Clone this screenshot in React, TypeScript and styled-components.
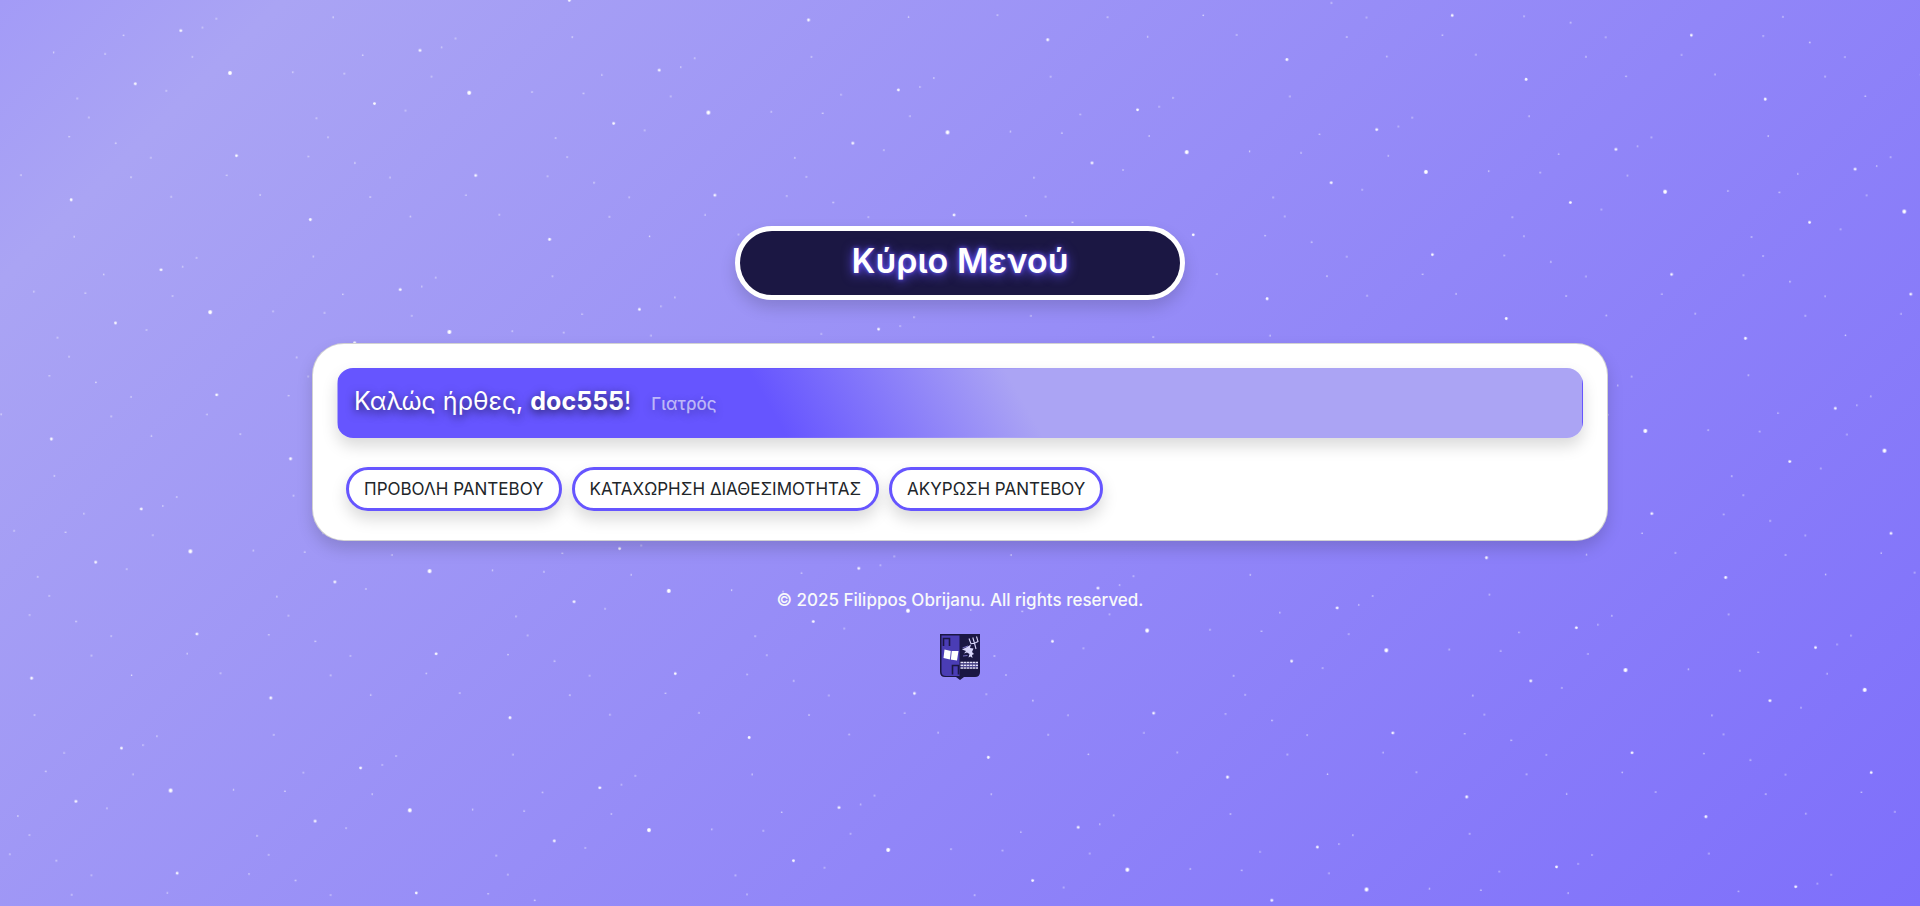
import React from 'react';
import styled, { createGlobalStyle } from 'styled-components';

const colors = {
  ink: '#1b1743',
  violet: '#6655ff',
  lilac: '#aba4f4',
  text: '#212529',
};

const softShadow = '0 8px 16px rgba(0, 0, 0, 0.15)';

const GlobalStyle = createGlobalStyle`
  *, *::before, *::after { box-sizing: border-box; }
  body {
    margin: 0;
    font-family: Inter, "Noto Sans", sans-serif;
    font-size: 17px;
    line-height: 24px;
    color: ${colors.text};
  }
`;

const Page = styled.div`
  position: relative;
  isolation: isolate;
  display: flex;
  flex-direction: column;
  align-items: center;
  justify-content: center;
  min-height: 100vh;
  overflow: hidden;
  background: linear-gradient(135deg, #a39bf7 0%, #aaa4f4 10%, #7e6ffb 100%);
`;

const Sky = styled.svg`
  position: absolute;
  inset: 0;
  z-index: -1;
  width: 100%;
  height: 100%;
`;

const Container = styled.main`
  display: flex;
  flex-direction: column;
  align-items: center;
  width: 100%;
  max-width: 1320px;
  padding: 0 12px;
`;

const Title = styled.h1`
  width: 100%;
  max-width: 450px;
  margin: 0 0 43px;
  padding: 10px 20px 14px;
  border: 5px solid #fff;
  border-radius: 37px;
  background: ${colors.ink};
  box-shadow: ${softShadow};
  color: #fff;
  font-size: 34px;
  font-weight: 600;
  line-height: 40px;
  text-align: center;
  text-shadow: 0 0 4px ${colors.violet}, 0 2px 12px ${colors.violet};
`;

const Card = styled.section`
  width: 100%;
  padding: 24px;
  border: 1px solid rgba(0, 0, 0, 0.175);
  border-radius: 32px;
  background: #fff;
  box-shadow: ${softShadow};
`;

const Banner = styled.header`
  display: flex;
  flex-wrap: wrap;
  align-items: baseline;
  gap: 0 20px;
  padding: 14px 16px 18px;
  border: 1px solid transparent;
  border-radius: 16px;
  background: linear-gradient(60deg, ${colors.violet} 35%, ${colors.lilac} 55%);
  box-shadow: ${softShadow};
  color: #fff;
  text-shadow: 0 3px 10px rgba(0, 0, 0, 0.7);
`;

const Greeting = styled.h2`
  margin: 0;
  font-size: 25px;
  font-weight: 400;
  line-height: 36px;

  strong { font-weight: 700; }
`;

const Role = styled.span`
  color: rgba(255, 255, 255, 0.6);
  font-weight: 500;
  text-shadow: 0 3px 10px rgba(0, 0, 0, 0.3);
`;

const Actions = styled.nav`
  display: flex;
  flex-wrap: wrap;
  gap: 10px;
  margin-top: 24px;
  padding: 5px 9px;
`;

const ActionButton = styled.button`
  padding: 7px 15px;
  border: 3px solid ${colors.violet};
  border-radius: 22px;
  background: #fff;
  box-shadow: ${softShadow};
  color: ${colors.text};
  font: inherit;
  cursor: pointer;
`;

const Footer = styled.footer`
  display: flex;
  flex-direction: column;
  align-items: center;
  gap: 22px;
  margin-top: 47px;
  color: #f8f9fa;
`;

const Copyright = styled.p`
  margin: 0;
  font-weight: 500;
`;

const Crest = styled.svg`
  display: block;
  width: 40px;
  height: 46px;
`;

/* x, y, radius, opacity inside one 240 by 240 tile */
const stars: [number, number, number, number][] = [
  [20, 20, 1.9, 1],
  [166.5, 38.6, 1.4, 0.95],
  [33.3, 101.8, 1.4, 0.95],
  [112.2, 159.5, 1.4, 0.95],
  [207.5, 221.8, 1.4, 0.95],
  [82.6, 14.1, 0.8, 0.7],
  [134, 11.2, 0.8, 0.75],
  [221.2, 7, 0.8, 0.7],
  [198, 43, 0.8, 0.7],
  [109.9, 58, 0.8, 0.8],
  [123, 76, 0.8, 0.7],
  [105, 96.8, 0.8, 0.7],
  [151.9, 99.4, 0.8, 0.7],
  [25.2, 122.2, 0.8, 0.7],
  [188.1, 111, 0.8, 0.7],
  [60.1, 139.1, 0.8, 0.7],
  [170, 132.1, 0.8, 0.7],
  [211.6, 148.2, 0.8, 0.75],
  [118.2, 196, 0.8, 0.75],
  [1.9, 207, 0.8, 0.75],
  [228.8, 217, 0.8, 0.7],
  [150.8, 231.2, 0.8, 0.7],
];

const StarField = () => (
  <Sky aria-hidden="true">
    <defs>
      <pattern
        id="stars"
        width="240"
        height="240"
        patternUnits="userSpaceOnUse"
        patternTransform="translate(230 73) rotate(4.73) translate(-20 -20)"
      >
        {stars.map(([x, y, r, o]) => (
          <circle key={`${x}-${y}`} cx={x} cy={y} r={r} fill="#fff" fillOpacity={o} />
        ))}
      </pattern>
    </defs>
    <rect width="100%" height="100%" fill="url(#stars)" />
  </Sky>
);

const CrestLogo = () => (
  <Crest viewBox="0 0 40 46" role="img" aria-label="Crest">
    <path d="M0 0H40V38Q40 43 35 43H24L20 46L16 43H5Q0 43 0 38Z" fill={colors.ink} />
    <path d="M1.5 1.5H19.5V42H6Q1.5 42 1.5 37.5Z" fill="#4a3db5" />
    <path d="M3.5 12V4.5H9.5V12M12.5 40.5V31.5H18.5V40.5" fill="none" stroke={colors.ink} strokeWidth="1.6" />
    <path d="M4.5 15.5L11 17L18.5 17L17 26.5L10 25.5L3.5 24Z" fill="#fff" />
    <path d="M11.3 17L10.3 26" stroke="#4a3db5" strokeWidth="0.9" />
    <path d="M29 4.5L31 9.8Q34.500 9.800 38 7.500L36.500 2.500M32.800 3.500L35 11L36 15" fill="none" stroke="#d9d6fa" strokeWidth="1.1" />
    <path d="M22 15.500L27 13L31 10.500L30 14L33.500 14.500L32 18L34 20L32 21L32.500 24L30.500 22.500L28.500 23.500L29.500 20L27 18.500L24 19.500L26 17Z" fill="#d9d6fa" />
    <path d="M22.500 14L28 12M23 22L27.500 21.500" stroke="#8f86e4" strokeWidth="0.8" />
    <path d="M20.500 28.500H38M20.500 31.200H38M20.500 34H38" stroke="#e6e3fb" strokeWidth="1.5" strokeDasharray="2.6 0.5" />
    <path d="M20.500 29.900H38M20.500 32.600H38" stroke="#6f66c4" strokeWidth="0.7" />
  </Crest>
);

const actions = ['ΠΡΟΒΟΛΗ ΡΑΝΤΕΒΟΥ', 'ΚΑΤΑΧΩΡΗΣΗ ΔΙΑΘΕΣΙΜΟΤΗΤΑΣ', 'ΑΚΥΡΩΣΗ ΡΑΝΤΕΒΟΥ'];

export default function App() {
  return (
    <Page>
      <GlobalStyle />
      <StarField />
      <Container>
        <Title>Κύριο Μενού</Title>
        <Card>
          <Banner>
            <Greeting>
              Καλώς ήρθες, <strong>doc555</strong>!
            </Greeting>
            <Role>Γιατρός</Role>
          </Banner>
          <Actions>
            {actions.map((label) => (
              <ActionButton key={label} type="button">
                {label}
              </ActionButton>
            ))}
          </Actions>
        </Card>
      </Container>
      <Footer>
        <Copyright>© 2025 Filippos Obrijanu. All rights reserved.</Copyright>
        <CrestLogo />
      </Footer>
    </Page>
  );
}
